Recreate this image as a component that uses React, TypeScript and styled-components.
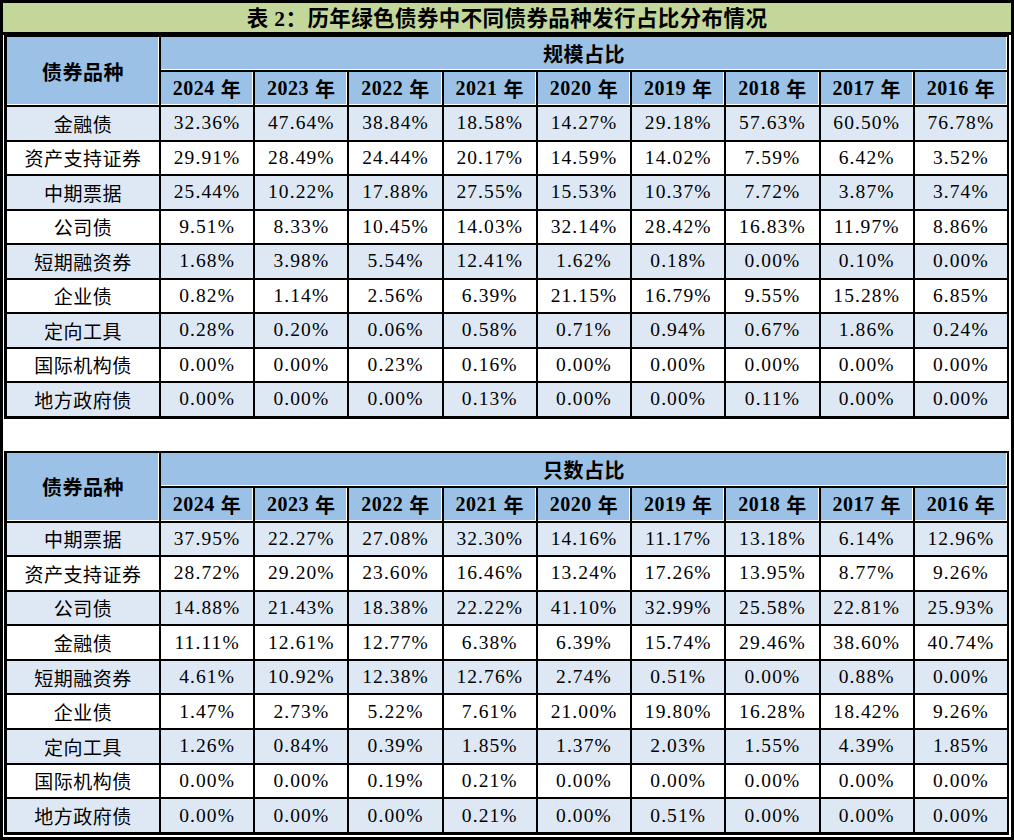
import React from "react";
import styled, { createGlobalStyle } from "styled-components";

const Global = createGlobalStyle`
  html, body { margin: 0; padding: 0; background: #fff; }
  * { box-sizing: border-box; }
`;

const FONT = `"Liberation Serif", "Noto Sans CJK SC", serif`;

const Frame = styled.div`
  width: 1014px;
  height: 840px;
  overflow: hidden;
  border: 3px solid #000;
  background: #fff;
  font-family: ${FONT};
  color: #000;
`;

const Title = styled.div`
  height: 32px;
  background: #c4d79b;
  border-bottom: 3px solid #000;
  display: flex;
  align-items: center;
  justify-content: center;
  padding-bottom: 3px;
  font-size: 21.5px;
  font-weight: 700;
  letter-spacing: 0.4px;
`;

const Body = styled.div`
  display: flex;
  flex-direction: column;
  gap: 32px;
  padding-left: 1px;
`;

const Grid = styled.div<{ $row: number }>`
  width: 1005px;
  display: grid;
  grid-template-columns: 152px repeat(9, 1fr);
  grid-template-rows: 33px 33px repeat(9, ${(p) => p.$row}px);
  gap: 2px;
  padding: 2px 2px 3px 3px;
  background: #000;
`;

const HeadCell = styled.div`
  background: #9bc2e6;
  display: flex;
  align-items: center;
  justify-content: center;
  font-weight: 700;
  font-size: 20px;
  box-shadow: inset 0 -1px 0 #fff, inset -1px 0 0 #fff;
`;

const Corner = styled(HeadCell)`
  grid-row: 1 / span 2;
  grid-column: 1;
  letter-spacing: 0.5px;
`;

const GroupHead = styled(HeadCell)`
  grid-column: 2 / span 9;
  letter-spacing: 0.5px;
`;

const YearHead = styled(HeadCell)`
  letter-spacing: 0.5px;
  gap: 6px;
`;

const Cell = styled.div<{ $shade: boolean }>`
  background: ${(p) => (p.$shade ? "#dde8f4" : "#fff")};
  display: flex;
  align-items: center;
  justify-content: center;
  font-size: 19.5px;
  letter-spacing: 1.1px;
  white-space: nowrap;
`;

const NameCell = styled(Cell)`
  font-size: 19px;
  letter-spacing: 0.5px;
`;

const YEARS = ["2024", "2023", "2022", "2021", "2020", "2019", "2018", "2017", "2016"];

type Row = [string, string[]];

const scale: Row[] = [
  ["金融债", ["32.36%", "47.64%", "38.84%", "18.58%", "14.27%", "29.18%", "57.63%", "60.50%", "76.78%"]],
  ["资产支持证券", ["29.91%", "28.49%", "24.44%", "20.17%", "14.59%", "14.02%", "7.59%", "6.42%", "3.52%"]],
  ["中期票据", ["25.44%", "10.22%", "17.88%", "27.55%", "15.53%", "10.37%", "7.72%", "3.87%", "3.74%"]],
  ["公司债", ["9.51%", "8.33%", "10.45%", "14.03%", "32.14%", "28.42%", "16.83%", "11.97%", "8.86%"]],
  ["短期融资券", ["1.68%", "3.98%", "5.54%", "12.41%", "1.62%", "0.18%", "0.00%", "0.10%", "0.00%"]],
  ["企业债", ["0.82%", "1.14%", "2.56%", "6.39%", "21.15%", "16.79%", "9.55%", "15.28%", "6.85%"]],
  ["定向工具", ["0.28%", "0.20%", "0.06%", "0.58%", "0.71%", "0.94%", "0.67%", "1.86%", "0.24%"]],
  ["国际机构债", ["0.00%", "0.00%", "0.23%", "0.16%", "0.00%", "0.00%", "0.00%", "0.00%", "0.00%"]],
  ["地方政府债", ["0.00%", "0.00%", "0.00%", "0.13%", "0.00%", "0.00%", "0.11%", "0.00%", "0.00%"]],
];

const count: Row[] = [
  ["中期票据", ["37.95%", "22.27%", "27.08%", "32.30%", "14.16%", "11.17%", "13.18%", "6.14%", "12.96%"]],
  ["资产支持证券", ["28.72%", "29.20%", "23.60%", "16.46%", "13.24%", "17.26%", "13.95%", "8.77%", "9.26%"]],
  ["公司债", ["14.88%", "21.43%", "18.38%", "22.22%", "41.10%", "32.99%", "25.58%", "22.81%", "25.93%"]],
  ["金融债", ["11.11%", "12.61%", "12.77%", "6.38%", "6.39%", "15.74%", "29.46%", "38.60%", "40.74%"]],
  ["短期融资券", ["4.61%", "10.92%", "12.38%", "12.76%", "2.74%", "0.51%", "0.00%", "0.88%", "0.00%"]],
  ["企业债", ["1.47%", "2.73%", "5.22%", "7.61%", "21.00%", "19.80%", "16.28%", "18.42%", "9.26%"]],
  ["定向工具", ["1.26%", "0.84%", "0.39%", "1.85%", "1.37%", "2.03%", "1.55%", "4.39%", "1.85%"]],
  ["国际机构债", ["0.00%", "0.00%", "0.19%", "0.21%", "0.00%", "0.00%", "0.00%", "0.00%", "0.00%"]],
  ["地方政府债", ["0.00%", "0.00%", "0.00%", "0.21%", "0.00%", "0.51%", "0.00%", "0.00%", "0.00%"]],
];

function Table({ group, rows, rowH }: { group: string; rows: Row[]; rowH: number }) {
  return (
    <Grid $row={rowH}>
      <Corner>债券品种</Corner>
      <GroupHead>{group}</GroupHead>
      {YEARS.map((y) => (
        <YearHead key={y}>
          <span>{y}</span>
          <span>年</span>
        </YearHead>
      ))}
      {rows.map(([name, vals], i) => (
        <React.Fragment key={name}>
          <NameCell $shade={i % 2 === 0}>{name}</NameCell>
          {vals.map((v, j) => (
            <Cell key={j} $shade={i % 2 === 0}>
              {v}
            </Cell>
          ))}
        </React.Fragment>
      ))}
    </Grid>
  );
}

export default function App() {
  return (
    <>
      <Global />
      <Frame>
        <Title>表 2：历年绿色债券中不同债券品种发行占比分布情况</Title>
        <Body>
          <Table group="规模占比" rows={scale} rowH={32.5} />
          <Table group="只数占比" rows={count} rowH={32.6} />
        </Body>
      </Frame>
    </>
  );
}
